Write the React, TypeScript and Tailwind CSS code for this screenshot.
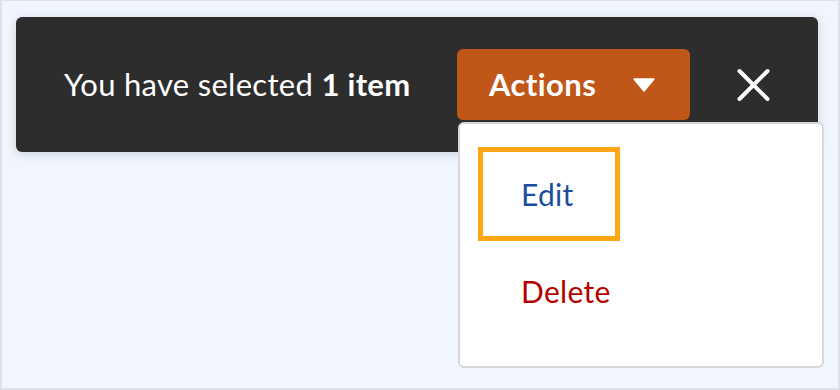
import React from "react"

const font = { fontFamily: "Lato, 'Noto Sans', sans-serif" }

function Caret() {
  return (
    <svg width="22" height="14" viewBox="0 0 22 14" className="block">
      <path d="M1 1 L21 1 L11 13 Z" fill="#ffffff" strokeLinejoin="round" stroke="#ffffff" strokeWidth="1.5" />
    </svg>
  )
}

function CloseIcon() {
  return (
    <svg width="33" height="33" viewBox="0 0 33 33" className="block">
      <path d="M2.5 3 L30.5 31 M30.5 3 L2.5 31" stroke="#ffffff" strokeWidth="4" strokeLinecap="round" />
    </svg>
  )
}

export default function App() {
  return (
    <div
      className="w-[840px] h-[390px] border-2 border-t border-[#dde2e9] bg-[#f0f5fe] overflow-hidden"
      style={font}
    >
      <div className="ml-[14px] mt-[16px] w-[802px] h-[135px] rounded-md bg-[#2d2d2d] shadow-[0_2px_10px_rgba(40,50,70,0.18)] flex items-center pl-12 pr-[48px]">
        <p className="flex-1 text-[31px] text-white tracking-[0.3px]">
          You have selected <span className="font-bold">1 item</span>
        </p>
        <div className="relative">
          <button className="w-[233px] h-[71px] rounded-md bg-[#c05617] flex items-center pl-8 pr-[35px] text-white">
            <span className="flex-1 text-left text-[31px] font-bold tracking-[0.4px]">Actions</span>
            <Caret />
          </button>
          <div className="absolute left-[1px] top-[73px] w-[366px] h-[246px] bg-white border-2 border-[#d6d7d9] rounded-md pt-[23px] pl-[18px]">
            <div className="w-[142px] h-[94px] border-[5px] border-[#ffa412] flex items-center pl-[38px] text-[30px] tracking-[0.3px] text-[#1c4e9f]">
              Edit
            </div>
            <div className="w-[142px] h-[94px] mt-[3px] flex items-center pl-[43px] text-[30px] tracking-[0.3px] text-[#b50000]">
              Delete
            </div>
          </div>
        </div>
        <button className="ml-[47px] w-[33px] h-[33px]">
          <CloseIcon />
        </button>
      </div>
    </div>
  )
}
